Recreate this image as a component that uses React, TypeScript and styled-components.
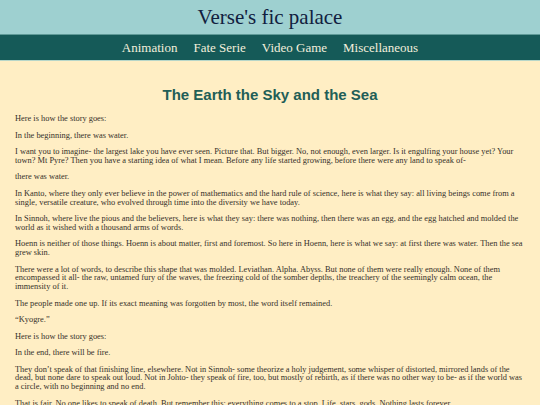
import React from "react";
import styled, { createGlobalStyle } from "styled-components";

const Global = createGlobalStyle`
  html, body { margin: 0; padding: 0; background: #ffeec4; }
  body { font-family: "Liberation Serif", serif; }
`;

const Header = styled.header`
  background: #9ed0d0;
  height: 35px;
  display: flex;
  align-items: center;
  justify-content: center;
  border-bottom: 1px solid #5f9a98;
  box-sizing: border-box;
`;

const Title = styled.h1`
  margin: 0;
  font-family: "Liberation Serif", serif;
  font-weight: normal;
  font-size: 21px;
  color: #11203f;
`;

const Nav = styled.nav`
  background: #155a58;
  height: 26px;
  display: flex;
  align-items: center;
  justify-content: center;
  gap: 16px;
  border-bottom: 1px solid #b7d6c9;
  box-sizing: border-box;
`;

const NavLink = styled.a`
  font-family: "Liberation Serif", serif;
  font-size: 13px;
  color: #f3efdc;
  text-decoration: none;
`;

const Main = styled.main`
  padding: 25px 15px 0 15px;
`;

const Heading = styled.h2`
  margin: 0 0 12px;
  text-align: center;
  font-family: "Liberation Sans", Arial, sans-serif;
  font-weight: bold;
  font-size: 15px;
  line-height: 17px;
  color: #225e57;
`;

const Para = styled.p`
  margin: 0 0 7.75px;
  font-family: "Liberation Serif", serif;
  font-size: 8.4px;
  line-height: 8.75px;
  color: #35302a;
`;

const paragraphs = [
  "Here is how the story goes:",
  "In the beginning, there was water.",
  "I want you to imagine- the largest lake you have ever seen. Picture that. But bigger. No, not enough, even larger. Is it engulfing your house yet? Your town? Mt Pyre? Then you have a starting idea of what I mean. Before any life started growing, before there were any land to speak of-",
  "there was water.",
  "In Kanto, where they only ever believe in the power of mathematics and the hard rule of science, here is what they say: all living beings come from a single, versatile creature, who evolved through time into the diversity we have today.",
  "In Sinnoh, where live the pious and the believers, here is what they say: there was nothing, then there was an egg, and the egg hatched and molded the world as it wished with a thousand arms of words.",
  "Hoenn is neither of those things. Hoenn is about matter, first and foremost. So here in Hoenn, here is what we say: at first there was water. Then the sea grew skin.",
  "There were a lot of words, to describe this shape that was molded. Leviathan. Alpha. Abyss. But none of them were really enough. None of them encompassed it all- the raw, untamed fury of the waves, the freezing cold of the somber depths, the treachery of the seemingly calm ocean, the immensity of it.",
  "The people made one up. If its exact meaning was forgotten by most, the word itself remained.",
  "\u201cKyogre.\u201d",
  "Here is how the story goes:",
  "In the end, there will be fire.",
  "They don\u2019t speak of that finishing line, elsewhere. Not in Sinnoh- some theorize a holy judgement, some whisper of distorted, mirrored lands of the dead, but none dare to speak out loud. Not in Johto- they speak of fire, too, but mostly of rebirth, as if there was no other way to be- as if the world was a circle, with no beginning and no end.",
  "That is fair. No one likes to speak of death. But remember this: everything comes to a stop. Life, stars, gods. Nothing lasts forever.",
];

export default function App() {
  return (
    <>
      <Global />
      <Header>
        <Title>Verse's fic palace</Title>
      </Header>
      <Nav>
        <NavLink href="#">Animation</NavLink>
        <NavLink href="#">Fate Serie</NavLink>
        <NavLink href="#">Video Game</NavLink>
        <NavLink href="#">Miscellaneous</NavLink>
      </Nav>
      <Main>
        <Heading>The Earth the Sky and the Sea</Heading>
        {paragraphs.map((p, i) => (
          <Para key={i}>{p}</Para>
        ))}
      </Main>
    </>
  );
}
